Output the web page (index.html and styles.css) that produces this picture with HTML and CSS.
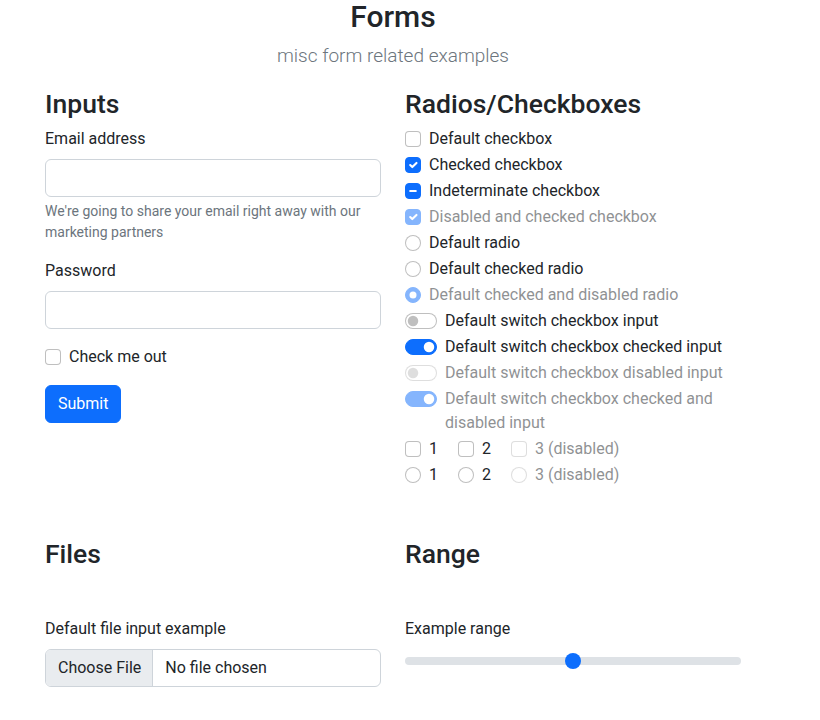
FILE: index.html
```html
<!DOCTYPE html>
<html lang="en">
<head>
<meta charset="utf-8">
<title>Forms</title>
<link rel="stylesheet" href="styles.css">
</head>
<body>
<div class="page">
  <header class="intro">
    <h1 class="title">Forms</h1>
    <p class="lead">misc form related examples</p>
  </header>
  <div class="grid">
    <section class="col">
      <h2 class="heading">Inputs</h2>
      <div class="field">
        <label class="label" for="email">Email address</label>
        <input class="control" id="email" type="email">
        <div class="help">We're going to share your email right away with our marketing partners</div>
      </div>
      <div class="field">
        <label class="label" for="pw">Password</label>
        <input class="control" id="pw" type="password">
      </div>
      <div class="field">
        <div class="check"><span class="box"></span><span class="text">Check me out</span></div>
      </div>
      <button class="btn" type="button">Submit</button>
    </section>

    <section class="col">
      <h2 class="heading">Radios/Checkboxes</h2>
      <div class="check"><span class="box"></span><span class="text">Default checkbox</span></div>
      <div class="check"><span class="box on"><svg viewBox="0 0 20 20"><path d="m6 10 3 3 6-6" fill="none" stroke="#fff" stroke-linecap="round" stroke-linejoin="round" stroke-width="3"/></svg></span><span class="text">Checked checkbox</span></div>
      <div class="check"><span class="box on"><svg viewBox="0 0 20 20"><path d="M6 10h8" fill="none" stroke="#fff" stroke-linecap="round" stroke-linejoin="round" stroke-width="3"/></svg></span><span class="text">Indeterminate checkbox</span></div>
      <div class="check disabled"><span class="box on"><svg viewBox="0 0 20 20"><path d="m6 10 3 3 6-6" fill="none" stroke="#fff" stroke-linecap="round" stroke-linejoin="round" stroke-width="3"/></svg></span><span class="text">Disabled and checked checkbox</span></div>
      <div class="check"><span class="box radio"></span><span class="text">Default radio</span></div>
      <div class="check"><span class="box radio"></span><span class="text">Default checked radio</span></div>
      <div class="check disabled"><span class="box radio on"><svg viewBox="-4 -4 8 8"><circle r="2" fill="#fff"/></svg></span><span class="text">Default checked and disabled radio</span></div>
      <div class="check"><span class="box switch"><svg viewBox="-4 -4 8 8"><circle r="3" fill="rgba(0,0,0,.25)"/></svg></span><span class="text">Default switch checkbox input</span></div>
      <div class="check"><span class="box switch on"><svg viewBox="-4 -4 8 8"><circle r="3" fill="#fff"/></svg></span><span class="text">Default switch checkbox checked input</span></div>
      <div class="check disabled"><span class="box switch"><svg viewBox="-4 -4 8 8"><circle r="3" fill="rgba(0,0,0,.25)"/></svg></span><span class="text">Default switch checkbox disabled input</span></div>
      <div class="check disabled"><span class="box switch on"><svg viewBox="-4 -4 8 8"><circle r="3" fill="#fff"/></svg></span><span class="text">Default switch checkbox checked and disabled input</span></div>
      <div class="inline-row">
        <div class="check inline"><span class="box"></span><span class="text">1</span></div>
        <div class="check inline"><span class="box"></span><span class="text">2</span></div>
        <div class="check inline disabled"><span class="box"></span><span class="text">3 (disabled)</span></div>
      </div>
      <div class="inline-row">
        <div class="check inline"><span class="box radio"></span><span class="text">1</span></div>
        <div class="check inline"><span class="box radio"></span><span class="text">2</span></div>
        <div class="check inline disabled"><span class="box radio"></span><span class="text">3 (disabled)</span></div>
      </div>
    </section>

    <section class="col lower">
      <h2 class="heading">Files</h2>
      <div class="lower-body">
        <label class="label">Default file input example</label>
        <div class="file">
          <span class="file-btn">Choose File</span>
          <span class="file-name">No file chosen</span>
        </div>
      </div>
    </section>

    <section class="col lower">
      <h2 class="heading">Range</h2>
      <div class="lower-body">
        <label class="label" for="range">Example range</label>
        <input class="range" id="range" type="range" min="0" max="100" value="50">
      </div>
    </section>
  </div>
</div>
</body>
</html>
```

FILE: styles.css
```css
* { box-sizing: border-box; }

body {
  margin: 0;
  font-family: Roboto, "Liberation Sans", sans-serif;
  font-size: 16px;
  line-height: 1.5;
  color: #212529;
  background: #fff;
}

.page {
  width: 696px;
  margin-left: 45px;
}

.intro {
  text-align: center;
}

.title {
  margin: 0;
  font-size: 30px;
  font-weight: 500;
  line-height: 34px;
}

.lead {
  margin: 8px 0 0;
  font-size: 19px;
  font-weight: 300;
  color: #6c757d;
  line-height: 1.5;
}

.grid {
  display: grid;
  grid-template-columns: 336px 336px;
  column-gap: 24px;
  margin-top: 17px;
}

.heading {
  margin: 0 0 7px;
  font-size: 26.5px;
  font-weight: 500;
  line-height: 32px;
}

.field {
  margin-bottom: 16px;
}

.label {
  display: block;
  margin-bottom: 8px;
}

.control {
  display: block;
  width: 100%;
  height: 38px;
  padding: 6px 12px;
  font: inherit;
  border: 1px solid #ced4da;
  border-radius: 6px;
  background: #fff;
}

.help {
  margin-top: 4px;
  font-size: 14px;
  line-height: 1.5;
  color: #6c757d;
}

.btn {
  display: inline-block;
  height: 38px;
  padding: 6px 12px;
  font: inherit;
  color: #fff;
  background: #0d6efd;
  border: 1px solid #0d6efd;
  border-radius: 6px;
}

.check {
  display: flex;
  align-items: flex-start;
  gap: 8px;
  min-height: 24px;
  margin-bottom: 2px;
}

.box {
  flex: none;
  display: flex;
  align-items: center;
  width: 16px;
  height: 16px;
  margin-top: 4px;
  border: 1px solid rgba(0, 0, 0, 0.25);
  border-radius: 4px;
  background: #fff;
}

.box svg {
  display: block;
  width: 14px;
  height: 14px;
}

.box.on {
  background: #0d6efd;
  border-color: #0d6efd;
}

.box.radio {
  border-radius: 50%;
}

.box.switch {
  width: 32px;
  border-radius: 32px;
}

.box.switch.on {
  justify-content: flex-end;
}

.disabled {
  opacity: 0.5;
}

.inline-row {
  display: flex;
}

.check.inline {
  margin-right: 20px;
}

.lower {
  margin-top: 49px;
}

.lower-body {
  margin-top: 47px;
}

.file {
  display: flex;
  align-items: stretch;
  height: 38px;
  border: 1px solid #ced4da;
  border-radius: 6px;
  overflow: hidden;
}

.file-btn {
  display: flex;
  align-items: center;
  padding: 0 11px 0 12px;
  background: #e9ecef;
  border-right: 1px solid #ced4da;
}

.file-name {
  display: flex;
  align-items: center;
  padding-left: 12px;
}

.range {
  display: block;
  width: 100%;
  height: 24px;
  margin: 0;
  padding: 0;
  background: transparent;
  -webkit-appearance: none;
  appearance: none;
}

.range::-webkit-slider-runnable-track {
  height: 8px;
  background: #dee2e6;
  border-radius: 16px;
  border: 0;
}

.range::-webkit-slider-thumb {
  -webkit-appearance: none;
  appearance: none;
  width: 16px;
  height: 16px;
  margin-top: -4px;
  border: 0;
  border-radius: 50%;
  background: #0d6efd;
}
```
